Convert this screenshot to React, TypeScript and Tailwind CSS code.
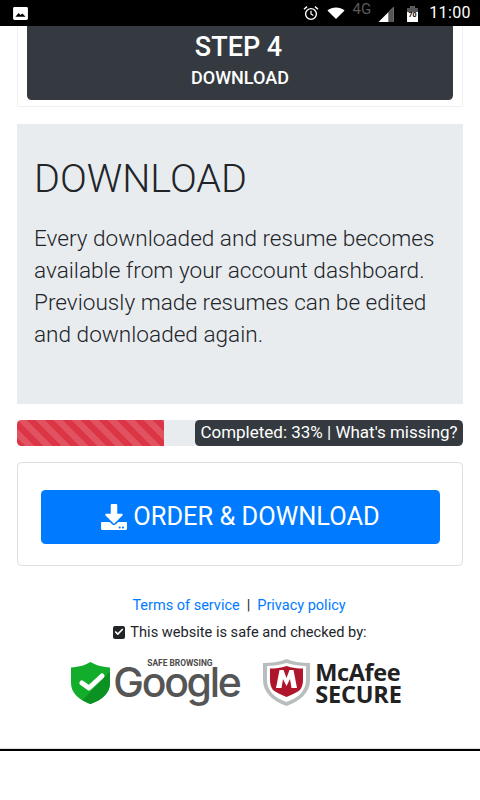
import { Check } from "lucide-react";
import { FaDownload } from "react-icons/fa";

const StatusBar = () => (
  <div className="h-[26px] bg-black flex items-center justify-between pl-[13px] pr-[9px]">
    <svg viewBox="0 0 16 14" className="w-[15px] h-[13px]">
      <rect width="16" height="14" rx="1.5" fill="#fff" />
      <path d="M2.5 10.5 6 6.5l2 2.2 2-1.6 3.5 3.4z" fill="#000" />
    </svg>
    <div className="flex items-center">
      <svg viewBox="0 0 16 16" className="w-[16px] h-[16px]" fill="none" stroke="#fff">
        <circle cx="8" cy="9" r="5.4" strokeWidth="1.4" />
        <path d="M8 5.8V9l2.4 1.5" strokeWidth="1.2" />
        <path d="M1 4.2 4 1.6M15 4.2l-3-2.6" strokeWidth="1.4" />
      </svg>
      <svg viewBox="0 0 20 14" className="ml-[8px] w-[18px] h-[12px]">
        <path d="M0 4.2C5.5-.8 14.5-.8 20 4.2L10 14z" fill="#fff" />
      </svg>
      <span className="ml-[8px] mb-[8px] text-[15px] leading-[12px] text-[#5a5a5a]">4G</span>
      <svg viewBox="0 0 16 16" className="ml-[7px] mt-[2px] w-[16px] h-[15px]">
        <path d="M0 16 16 0v16z" fill="#fff" />
        <path d="M10.5 5.5 16 0v16h-5.5z" fill="#555" />
      </svg>
      <svg viewBox="0 0 11 16" className="ml-[13px] mt-[1px] w-[11px] h-[16px]">
        <path d="M3.5 0h4v2H11v14H0V2h3.5z" fill="#fff" />
        <path d="M3.5 0h4v2H11v4H0V2h3.5z" fill="#555" />
        <text x="5.5" y="11" textAnchor="middle" fontSize="7" fontWeight="700" fontFamily="Roboto, sans-serif" fill="#000">70</text>
      </svg>
      <span className="ml-[11px] text-[16px] leading-[26px] tracking-[0.4px] text-white">11:00</span>
    </div>
  </div>
);

const SafeBrowsing = () => (
  <div className="flex items-center">
    <svg viewBox="0 0 39 42" className="w-[39px] h-[42px] mt-[3px]">
      <path d="M19.5 0c5 3 11 5 19.5 5.5V21c0 10-8 17-19.5 21C8 38 0 31 0 21V5.5C8.500 5 14.500 3 19.500 0z" fill="#12ad2b" />
      <path d="M39 9.500V21c0 10-8 17-19.500 21-3-1-5.500-2.200-8-3.700z" fill="#0b9222" />
      <path d="m11 28 7 5 13-12" transform="translate(0 -7)" fill="none" stroke="#fff" strokeWidth="5" strokeLinecap="round" strokeLinejoin="round" />
    </svg>
    <div className="relative ml-[3px] w-[129px] h-[54px]">
      <span className="absolute left-[34px] top-[4px] text-[8.4px] leading-[10px] font-bold text-[#4a4a4a] whitespace-nowrap">SAFE BROWSING</span>
      <span className="absolute left-0 top-[3px] text-[41px] leading-[50px] tracking-[-2.3px] text-[#555] font-medium font-['Inter',sans-serif]">Google</span>
    </div>
  </div>
);

const McAfee = () => (
  <div className="flex items-center">
    <svg viewBox="0 0 47 47" className="w-[47px] h-[47px] mt-[3px]">
      <path d="M23.500 0C31 3 39 4 47 4v17c0 13-10 21-23.500 26C10 42 0 34 0 21V4c8 0 16-1 23.500-4z" fill="#b9bdbd" />
      <path d="M23.500 4C30 6 37 7 43 7v14c0 11-8 18-19.500 22C12 39 4 32 4 21V7c6 0 13-1 19.500-3z" fill="#fff" />
      <path d="M23.500 7C29 9 35 9.500 40 9.500V21c0 4-1 7-3 10-3 2-8 5-13.500 7C18 36 13 33 10 31c-2-3-3-6-3-10V9.500c5 0 11-.5 16.500-2.500z" fill="#b0162b" />
      <path d="M13 29 16.500 11h4l3 8 3-8h4L34 29h-5.500l-1.500-9-3.500 7-3.500-7-1.500 9z" fill="#fff" />
    </svg>
    <div className="ml-[5px] mt-[3px] flex flex-col font-['Open_Sans',sans-serif] font-bold text-[#222] text-[23.5px] leading-[22px]">
      <span className="tracking-[-0.4px]">McAfee</span>
      <span className="tracking-[-0.2px]">SECURE</span>
    </div>
  </div>
);

export default function App() {
  return (
    <div className="w-[480px] h-[800px] overflow-hidden bg-white font-['Roboto',sans-serif] text-[#212529]">
      <StatusBar />

      <div className="mx-[17px] h-[81px] border border-t-0 border-[#f0f0f0] px-[9px] pb-[6px]">
        <div className="h-full bg-[#343a40] rounded-b-[4.5px] text-white text-center font-medium">
          <div className="text-[27px] leading-[32px] pt-[5px] pr-[3px]">STEP 4</div>
          <div className="text-[18px] leading-[20px] mt-[5px]">DOWNLOAD</div>
        </div>
      </div>

      <div className="mt-[17px] mx-[17px] h-[280px] bg-[#e9ecef] pl-[17px] pr-[18px] pt-[33px]">
        <h1 className="text-[39.6px] leading-[43px] font-light">DOWNLOAD</h1>
        <p className="mt-[23px] text-[22.6px] leading-[32px] font-light">
          Every downloaded and resume becomes available from your account dashboard. Previously made resumes can be edited and downloaded again.
        </p>
      </div>

      <div className="relative mt-[16px] mx-[17px] h-[26px] bg-[#e9ecef] rounded-[4.5px] overflow-hidden">
        <div className="h-full w-[147px] bg-[#dc3545] bg-[linear-gradient(45deg,rgba(255,255,255,0.15)_25%,transparent_25%,transparent_50%,rgba(255,255,255,0.15)_50%,rgba(255,255,255,0.15)_75%,transparent_75%,transparent)] bg-[length:18px_18px]" />
        <div className="absolute right-0 top-0 h-full w-[268px] bg-[#343a40] rounded-[4.5px] text-white text-[17px] leading-[25px] text-center whitespace-nowrap">
          Completed: 33% | What's missing?
        </div>
      </div>

      <div className="mt-[16px] mx-[17px] h-[104px] border border-[#dfdfdf] rounded-[4.5px] pl-[23px] pr-[22px] pt-[27px]">
        <div className="h-[54px] bg-[#007bff] rounded-[4.5px] text-white flex items-center justify-center gap-[6px] text-[25.4px] leading-[50px] pb-[3px]">
          <FaDownload className="w-[26px] h-[26px] mt-[2px]" />
          <span>ORDER &amp; DOWNLOAD</span>
        </div>
      </div>

      <div className="mt-[30px] pr-[2px] flex justify-center text-[14.5px] leading-[20px]">
        <span className="text-[#007bff]">Terms of service</span>
        <span className="mx-[7px]">|</span>
        <span className="text-[#007bff]">Privacy policy</span>
      </div>

      <div className="mt-[6px] flex justify-center items-center gap-[5px] text-[14.6px] leading-[20px]">
        <span className="w-[12px] h-[13px] bg-[#212529] rounded-[2px] flex items-center justify-center">
          <Check className="w-[10px] h-[10px] text-white" strokeWidth={4} />
        </span>
        <span>This website is safe and checked by:</span>
      </div>

      <div className="mt-[10px] pr-[7px] flex justify-center items-center gap-[21px] h-[58px]">
        <SafeBrowsing />
        <McAfee />
      </div>

      <div className="mt-[38px] border-t border-[#e0e0e0]">
        <div className="h-[2px] bg-black" />
      </div>
    </div>
  );
}
